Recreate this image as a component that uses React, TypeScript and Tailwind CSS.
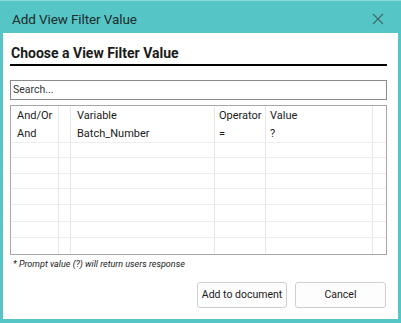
import React from "react";

const cols = "grid-cols-[48px_12px_144px_51px_107px_1fr]";

function Row({ cells, h, line }: { cells: string[]; h: string; line: boolean }) {
  return (
    <div className={`grid ${cols} ${h} ${line ? "border-b border-[#eeeeee]" : ""}`}>
      {cells.map((c, i) => (
        <div
          key={i}
          className={`flex items-center whitespace-nowrap overflow-hidden ${i === 0 || i === 2 ? "pl-[6px]" : ""} ${i === 3 || i === 4 ? "pl-[4px]" : ""} ${i < 5 ? "border-r border-[#e6e6e6]" : ""}`}
        >
          {c}
        </div>
      ))}
    </div>
  );
}

export default function App() {
  const empty = ["", "", "", "", "", ""];
  return (
    <div
      className="w-[401px] h-[323px] bg-[#56c5c5] flex flex-col text-[#1a1a1a]"
      style={{ fontFamily: 'Roboto, "Noto Sans", sans-serif' }}
    >
      <div className="h-[33px] flex items-center justify-between pl-[12px] pr-[17px] pt-[4px] border-t border-[#8fd8d8]">
        <span className="text-[13.5px] tracking-[-0.1px] text-[#1c2b2b] whitespace-nowrap">Add View Filter Value</span>
        <svg width="12" height="12" viewBox="0 0 12 12">
          <path d="M1 1 L11 11 M11 1 L1 11" stroke="#3d6b6b" strokeWidth="1.1" fill="none" />
        </svg>
      </div>
      <div className="flex-1 bg-white mx-[3px] mb-[4px] pl-[7px] pr-[11px] flex flex-col">
        <div className="h-[33px] flex items-end border-b-2 border-black pb-[4px]">
          <span className="text-[14px] font-bold pl-[1px] leading-none whitespace-nowrap">
            Choose a View Filter Value
          </span>
        </div>
        <div className="mt-[14px] h-[20px] border border-[#8a8a8a] flex items-center pl-[2px] text-[10.5px] text-[#333]">
          Search...
        </div>
        <div className="mt-[5px] border border-[#a6a6a6] text-[11px] text-[#1a1a1a] flex flex-col">
          <Row cells={["And/Or", "", "Variable", "Operator", "Value", ""]} h="h-[20px]" line={false} />
          <Row cells={["And", "", "Batch_Number", "=", "?", ""]} h="h-[17px]" line={true} />
          <Row cells={empty} h="h-[15px]" line={true} />
          <Row cells={empty} h="h-[16px]" line={true} />
          <Row cells={empty} h="h-[15px]" line={true} />
          <Row cells={empty} h="h-[16px]" line={true} />
          <Row cells={empty} h="h-[17px]" line={true} />
          <Row cells={empty} h="h-[16px]" line={true} />
          <Row cells={empty} h="h-[16px]" line={false} />
        </div>
        <div className="mt-[3px] pl-[3px] text-[9px] italic text-[#222] whitespace-nowrap">
          * Prompt value (?) will return users response
        </div>
        <div className="mt-[10px] flex justify-end gap-[8px] pr-[1px]">
          <button className="w-[90px] h-[26px] border border-[#cfcfcf] rounded-[3px] bg-[#fdfdfd] text-[10.5px] text-[#1a1a1a] whitespace-nowrap">
            Add to document
          </button>
          <button className="w-[91px] h-[26px] border border-[#cfcfcf] rounded-[3px] bg-[#fdfdfd] text-[10.5px] text-[#1a1a1a]">
            Cancel
          </button>
        </div>
      </div>
    </div>
  );
}
